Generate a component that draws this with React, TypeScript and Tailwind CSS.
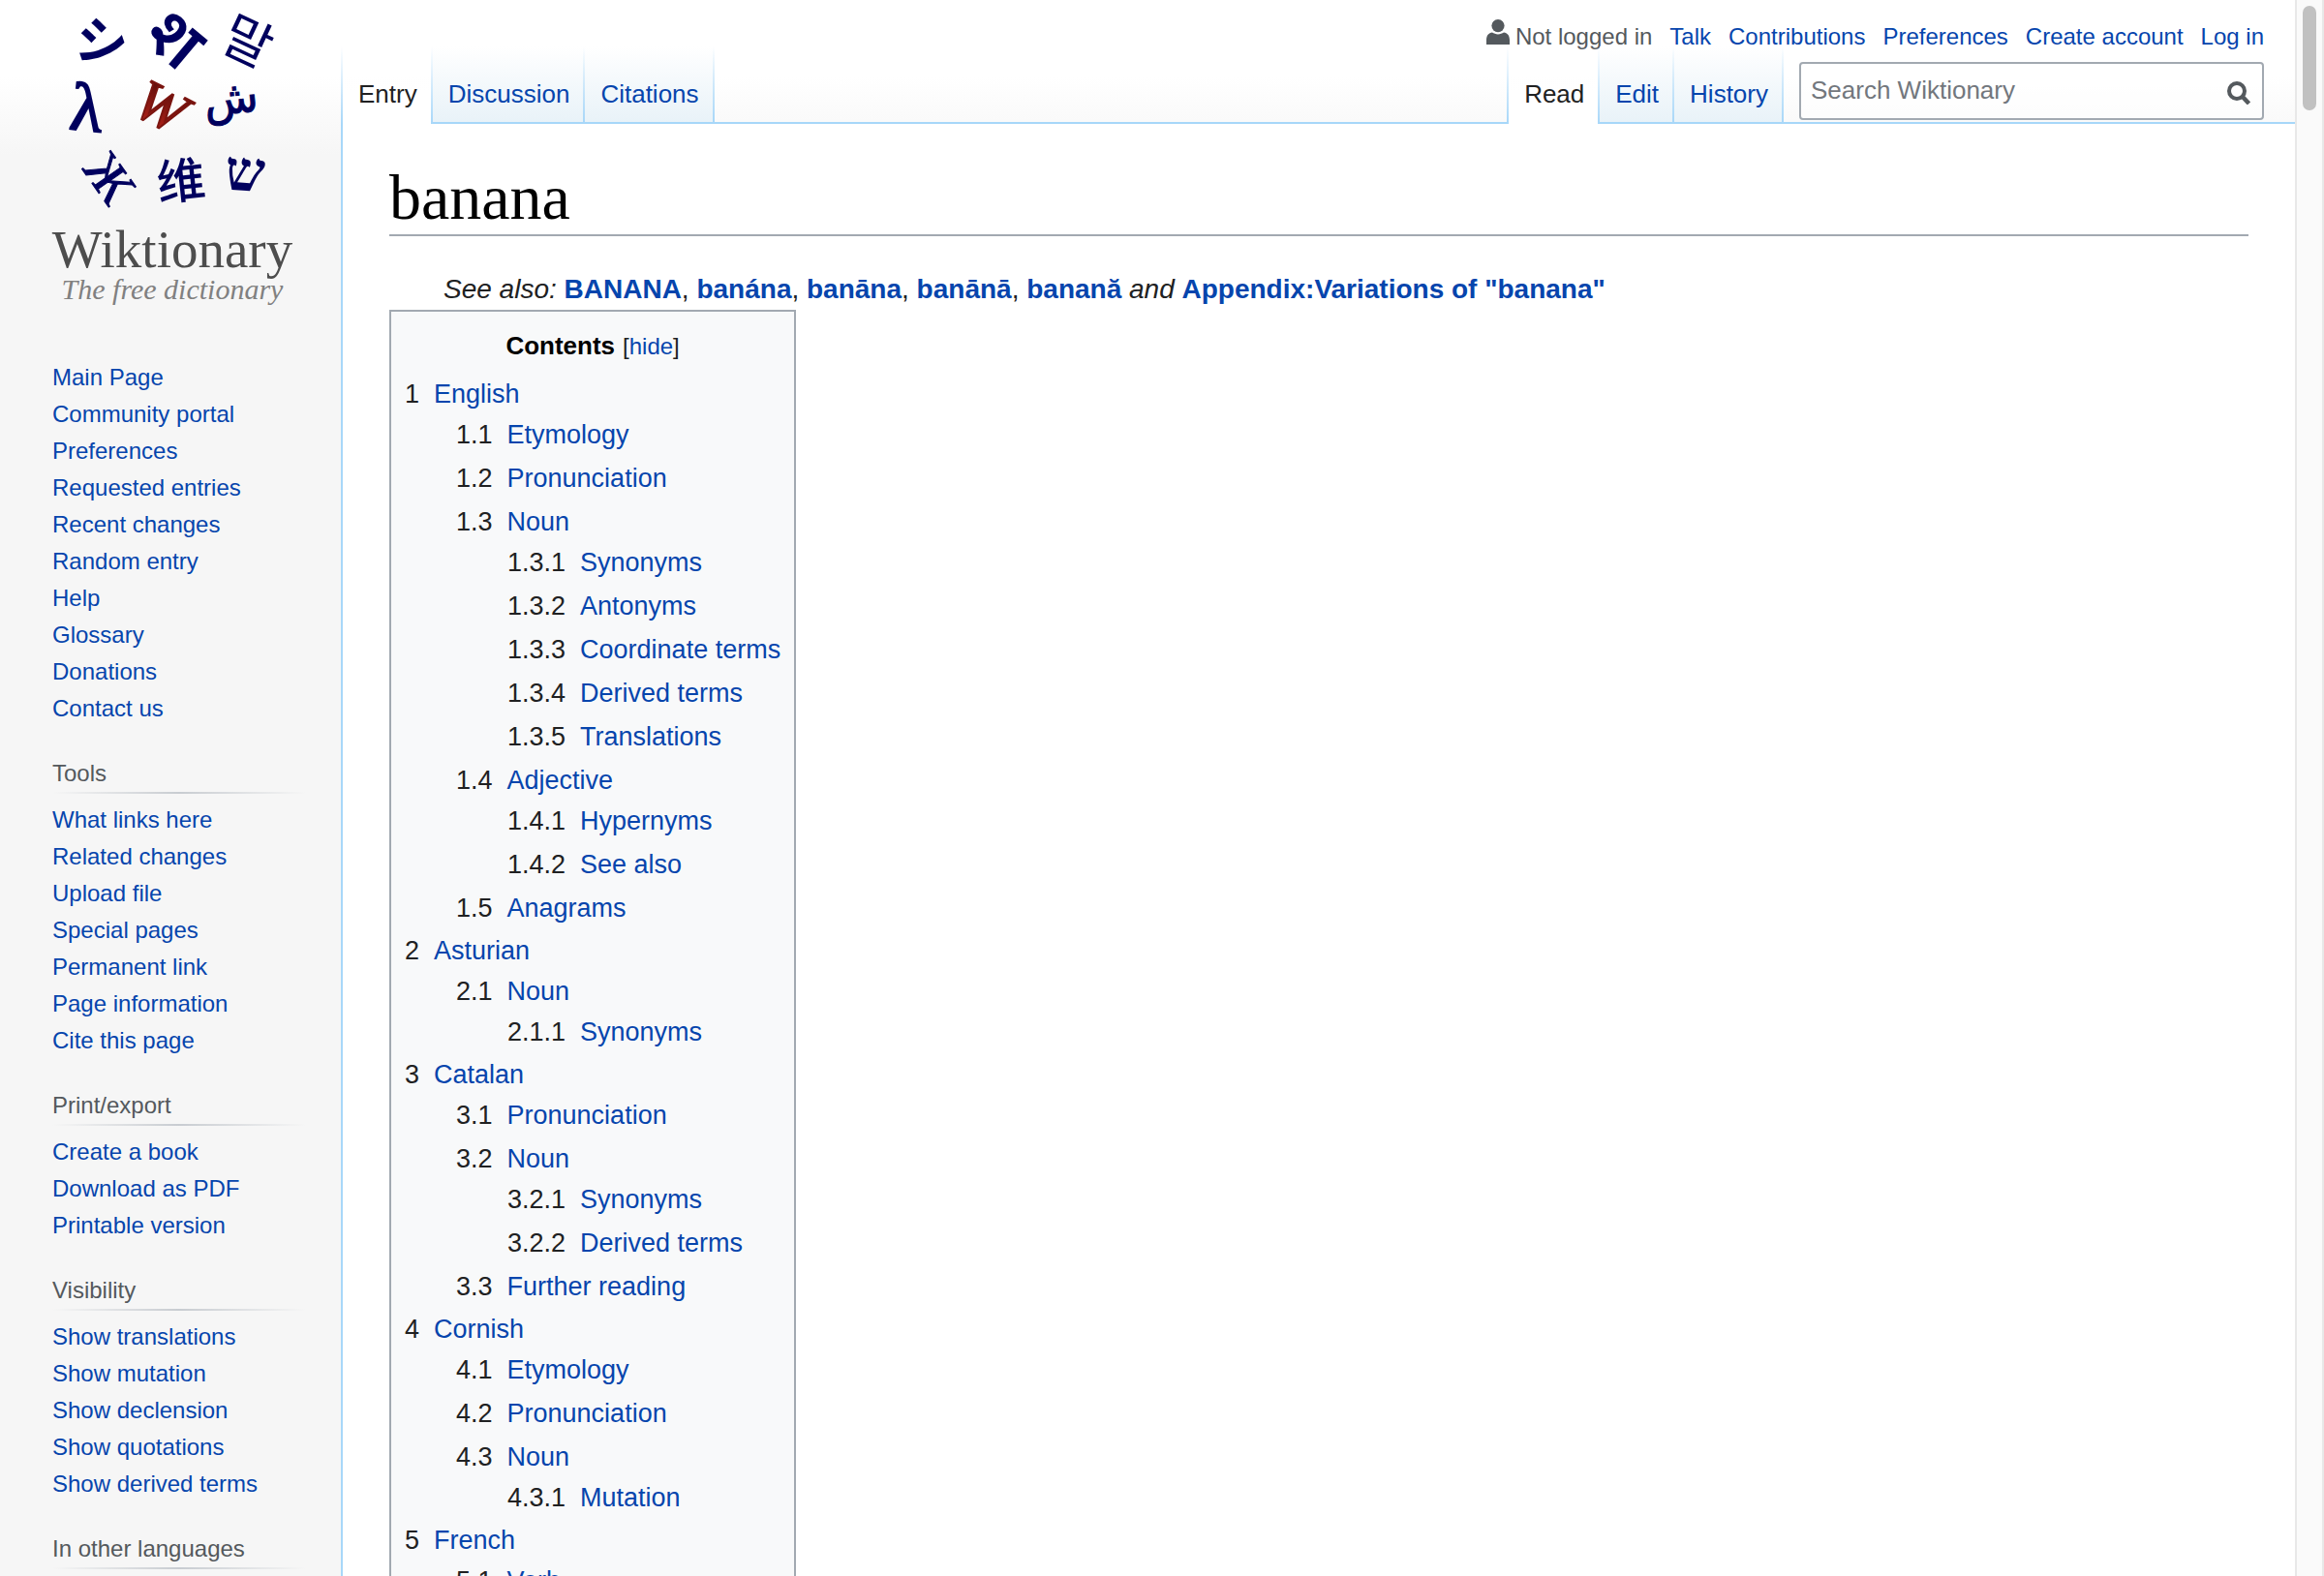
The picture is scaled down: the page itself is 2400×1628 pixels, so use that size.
import React from "react";

type TocItem = { label: string; children?: TocItem[] };

const toc: TocItem[] = [
  {
    label: "English",
    children: [
      { label: "Etymology" },
      { label: "Pronunciation" },
      {
        label: "Noun",
        children: [
          { label: "Synonyms" },
          { label: "Antonyms" },
          { label: "Coordinate terms" },
          { label: "Derived terms" },
          { label: "Translations" },
        ],
      },
      { label: "Adjective", children: [{ label: "Hypernyms" }, { label: "See also" }] },
      { label: "Anagrams" },
    ],
  },
  { label: "Asturian", children: [{ label: "Noun", children: [{ label: "Synonyms" }] }] },
  {
    label: "Catalan",
    children: [
      { label: "Pronunciation" },
      { label: "Noun", children: [{ label: "Synonyms" }, { label: "Derived terms" }] },
      { label: "Further reading" },
    ],
  },
  {
    label: "Cornish",
    children: [
      { label: "Etymology" },
      { label: "Pronunciation" },
      { label: "Noun", children: [{ label: "Mutation" }] },
    ],
  },
  { label: "French", children: [{ label: "Verb" }] },
];

const mainLinks = [
  "Main Page",
  "Community portal",
  "Preferences",
  "Requested entries",
  "Recent changes",
  "Random entry",
  "Help",
  "Glossary",
  "Donations",
  "Contact us",
];

const portals = [
  {
    title: "Tools",
    links: [
      "What links here",
      "Related changes",
      "Upload file",
      "Special pages",
      "Permanent link",
      "Page information",
      "Cite this page",
    ],
  },
  { title: "Print/export", links: ["Create a book", "Download as PDF", "Printable version"] },
  {
    title: "Visibility",
    links: ["Show translations", "Show mutation", "Show declension", "Show quotations", "Show derived terms"],
  },
  { title: "In other languages", links: [] },
];

const link = "text-[#0645ad] hover:underline";

function Logo() {
  return (
    <svg
      viewBox="0 0 352 320"
      className="block h-[320px] w-[352px] overflow-visible"
      role="img"
      aria-label="Wiktionary, The free dictionary"
    >
      <defs>
        <linearGradient id="red" x1="0" y1="0" x2="0" y2="1">
          <stop offset="0" stopColor="#4a0a08" />
          <stop offset="1" stopColor="#c0241a" />
        </linearGradient>
      </defs>
      <g fill="#00005e" textAnchor="middle">
        <text transform="translate(105 43) rotate(11)" y="20" fontSize="54" fontWeight="700" fontFamily="'Noto Sans CJK JP', sans-serif">シ</text>
        <text transform="translate(180 41) rotate(40)" y="23" fontSize="72" fontWeight="600" fontFamily="'Noto Sans', sans-serif">श</text>
        <text transform="translate(256 42) rotate(25)" y="20" fontSize="54" fontFamily="'Noto Sans CJK KR', sans-serif">말</text>
        <text transform="translate(90 111) rotate(6)" y="24" fontSize="70" stroke="#00005e" strokeWidth="2" fontFamily="'Liberation Serif', serif">λ</text>
        <text transform="translate(166 111) rotate(27)" y="19" fontSize="60" fontStyle="italic" fill="url(#red)" stroke="#7a140f" strokeWidth="2" fontFamily="'Liberation Serif', serif">W</text>
        <text transform="translate(239 109) rotate(-6)" y="8" fontSize="46" stroke="#00005e" strokeWidth="1" fontFamily="'DejaVu Sans', sans-serif">ش</text>
        <text transform="translate(113 184) rotate(55)" y="18" fontSize="54" stroke="#00005e" strokeWidth="1" fontFamily="'Liberation Serif', serif">Ж</text>
        <text transform="translate(187 186) rotate(-6)" y="19" fontSize="50" fontWeight="500" fontFamily="'Noto Sans CJK SC', sans-serif">维</text>
        <text transform="translate(253 178) rotate(4)" y="19" fontSize="58" fontWeight="700" fontFamily="'Liberation Serif', serif">ש</text>
      </g>
      <g textAnchor="middle" fontFamily="'Liberation Serif', serif">
        <text x="178" y="276" fontSize="55" fill="#4d4d4d">Wiktionary</text>
        <text x="178" y="309" fontSize="30" fontStyle="italic" fill="#808080">The free dictionary</text>
      </g>
    </svg>
  );
}

function Sidebar() {
  return (
    <aside className="w-[352px] shrink-0 text-2xl leading-[38px]">
      <a href="#main" className="block">
        <Logo />
      </a>
      <nav className="mt-[51px] pl-[54px] pr-9" aria-label="Navigation">
        <ul>
          {mainLinks.map((l) => (
            <li key={l}>
              <a href="#nav" className={link}>{l}</a>
            </li>
          ))}
        </ul>
        {portals.map((p) => (
          <section key={p.title} className="mt-[29px]">
            <h3 className="leading-[38px] text-[#54595d]">{p.title}</h3>
            <div className="h-0.5 bg-linear-to-r from-transparent via-[#c8ccd1] via-50% to-transparent" />
            <ul className="mt-2">
              {p.links.map((l) => (
                <li key={l}>
                  <a href="#nav" className={link}>{l}</a>
                </li>
              ))}
            </ul>
          </section>
        ))}
      </nav>
    </aside>
  );
}

function Divider() {
  return <span className="w-0.5 shrink-0 bg-linear-to-b from-transparent to-[#a7d7f9]" />;
}

function Tab({ label, active = false }: { label: string; active?: boolean }) {
  return (
    <a
      href="#tab"
      aria-current={active ? "page" : undefined}
      className={
        active
          ? "flex bg-linear-to-b from-transparent to-white to-60% text-[#202122]"
          : "flex bg-linear-to-b from-white to-[#e8f2f8] text-[#0645ad]"
      }
    >
      <span
        className={
          active
            ? "pl-4 pr-[14px] pt-[33px] leading-8"
            : "border-b-2 border-[#a7d7f9] pl-4 pr-[14px] pt-[33px] leading-8"
        }
      >
        {label}
      </span>
      <Divider />
    </a>
  );
}

function Header() {
  return (
    <header>
      <ul className="flex h-12 items-start justify-end gap-[18px] pr-8 pt-5 text-2xl">
        <li className="flex gap-1.5 text-[#54595d]">
          <svg viewBox="0 0 24 26" className="h-[26px] w-6" fill="#54595d" aria-hidden="true">
            <ellipse cx="12" cy="6.600" rx="6.600" ry="6.600" />
            <path d="M0 26v-4.500C0 16.500 2.500 14.200 6 13.600c1.800 1.200 3.800 1.800 6 1.800s4.200-.6 6-1.800c3.500.6 6 2.900 6 7.900V26z" />
          </svg>
          <span className="pt-1 leading-7">Not logged in</span>
        </li>
        {["Talk", "Contributions", "Preferences", "Create account", "Log in"].map((l) => (
          <li key={l} className="pt-1 leading-7">
            <a href="#user" className={link}>{l}</a>
          </li>
        ))}
      </ul>
      <div className="flex h-20 text-[26px]">
        <nav className="flex" aria-label="Namespaces">
          <Divider />
          <Tab label="Entry" active />
          <Tab label="Discussion" />
          <Tab label="Citations" />
        </nav>
        <div className="flex-1 border-b-2 border-[#a7d7f9]" />
        <nav className="flex" aria-label="Views">
          <Divider />
          <Tab label="Read" active />
          <Tab label="Edit" />
          <Tab label="History" />
        </nav>
        <form className="border-b-2 border-[#a7d7f9] pl-4 pr-8 pt-4" role="search">
          <div className="flex h-[60px] w-[480px] items-center rounded-sm border-2 border-[#a2a9b1] bg-white/50 pr-3">
            <input
              type="search"
              aria-label="Search Wiktionary"
              placeholder="Search Wiktionary"
              className="min-w-0 flex-1 pb-0.5 pl-2.5 outline-none placeholder:text-[#72777d]"
            />
            <button type="button" aria-label="Search">
              <svg viewBox="0 0 24 24" className="mt-1 block size-6" fill="none" stroke="#54595d" strokeWidth="4" aria-hidden="true">
                <circle cx="10" cy="10" r="8" />
                <path d="M15.500 15.500 22.500 23" strokeWidth="4.500" />
              </svg>
            </button>
          </div>
        </form>
      </div>
    </header>
  );
}

function TocList({ items, prefix = "" }: { items: TocItem[]; prefix?: string }) {
  return (
    <ul className={prefix ? "pl-[53px]" : ""}>
      {items.map((item, i) => {
        const num = `${prefix}${i + 1}`;
        const gap = i === 0 ? "" : prefix ? "mt-[3px]" : "mt-0.5";
        return (
          <li key={num} className={gap}>
            <a href={`#s${num}`} className="flex gap-[15px] whitespace-nowrap text-[#0645ad]">
              <span className="text-[#202122]">{num}</span>
              <span className="hover:underline">{item.label}</span>
            </a>
            {item.children && <TocList items={item.children} prefix={`${num}.`} />}
          </li>
        );
      })}
    </ul>
  );
}

const variants = ["BANANA", "banána", "banāna", "banānā", "banană"];

function Article() {
  return (
    <main className="flex-1 border-l-2 border-[#a7d7f9] bg-white px-12 pt-[39px] text-[#202122]">
      <h1 className="border-b-2 border-[#a2a9b1] pb-px font-['Liberation_Serif',serif] text-[66px] leading-[74px] text-black">
        banana
      </h1>
      <p className="mt-[34px] pl-14 text-[28px] leading-[42px]">
        <i>See also:</i>{" "}
        {variants.map((v, i) => (
          <React.Fragment key={v}>
            {i > 0 && ", "}
            <a href="#variant" className="font-bold text-[#0645ad] hover:underline">{v}</a>
          </React.Fragment>
        ))}{" "}
        <i>and</i>{" "}
        <a href="#appendix" className="font-bold text-[#0645ad] hover:underline">
          Appendix:Variations of "banana"
        </a>
      </p>
      <nav aria-label="Contents" className="w-fit border-2 border-[#a2a9b1] bg-[#f8f9fa] p-3.5 text-[27px] leading-[42px]">
        <div className="mb-[7px] flex items-baseline justify-center gap-2">
          <h2 className="text-[26px] font-bold leading-[42px] text-black">Contents</h2>
          <span className="text-2xl leading-[42px]">
            [<button type="button" className={link}>hide</button>]
          </span>
        </div>
        <TocList items={toc} />
      </nav>
    </main>
  );
}

export default function App() {
  return (
    <div className="flex h-screen overflow-hidden bg-[#f6f6f6] font-['Liberation_Sans',Arial,sans-serif]">
      <div className="flex min-w-0 flex-1 bg-[linear-gradient(to_bottom,#ffffff_80px,#f6f6f6_160px)]">
        <Sidebar />
        <div className="flex min-w-0 flex-1 flex-col">
          <Header />
          <Article />
        </div>
      </div>
      <div className="w-[30px] shrink-0 border-x-2 border-[#e8e8e8] bg-[#fafafa] px-1.5 pt-1.5" aria-hidden="true">
        <div className="h-[108px] rounded-full bg-[#c1c1c1]" />
      </div>
    </div>
  );
}
